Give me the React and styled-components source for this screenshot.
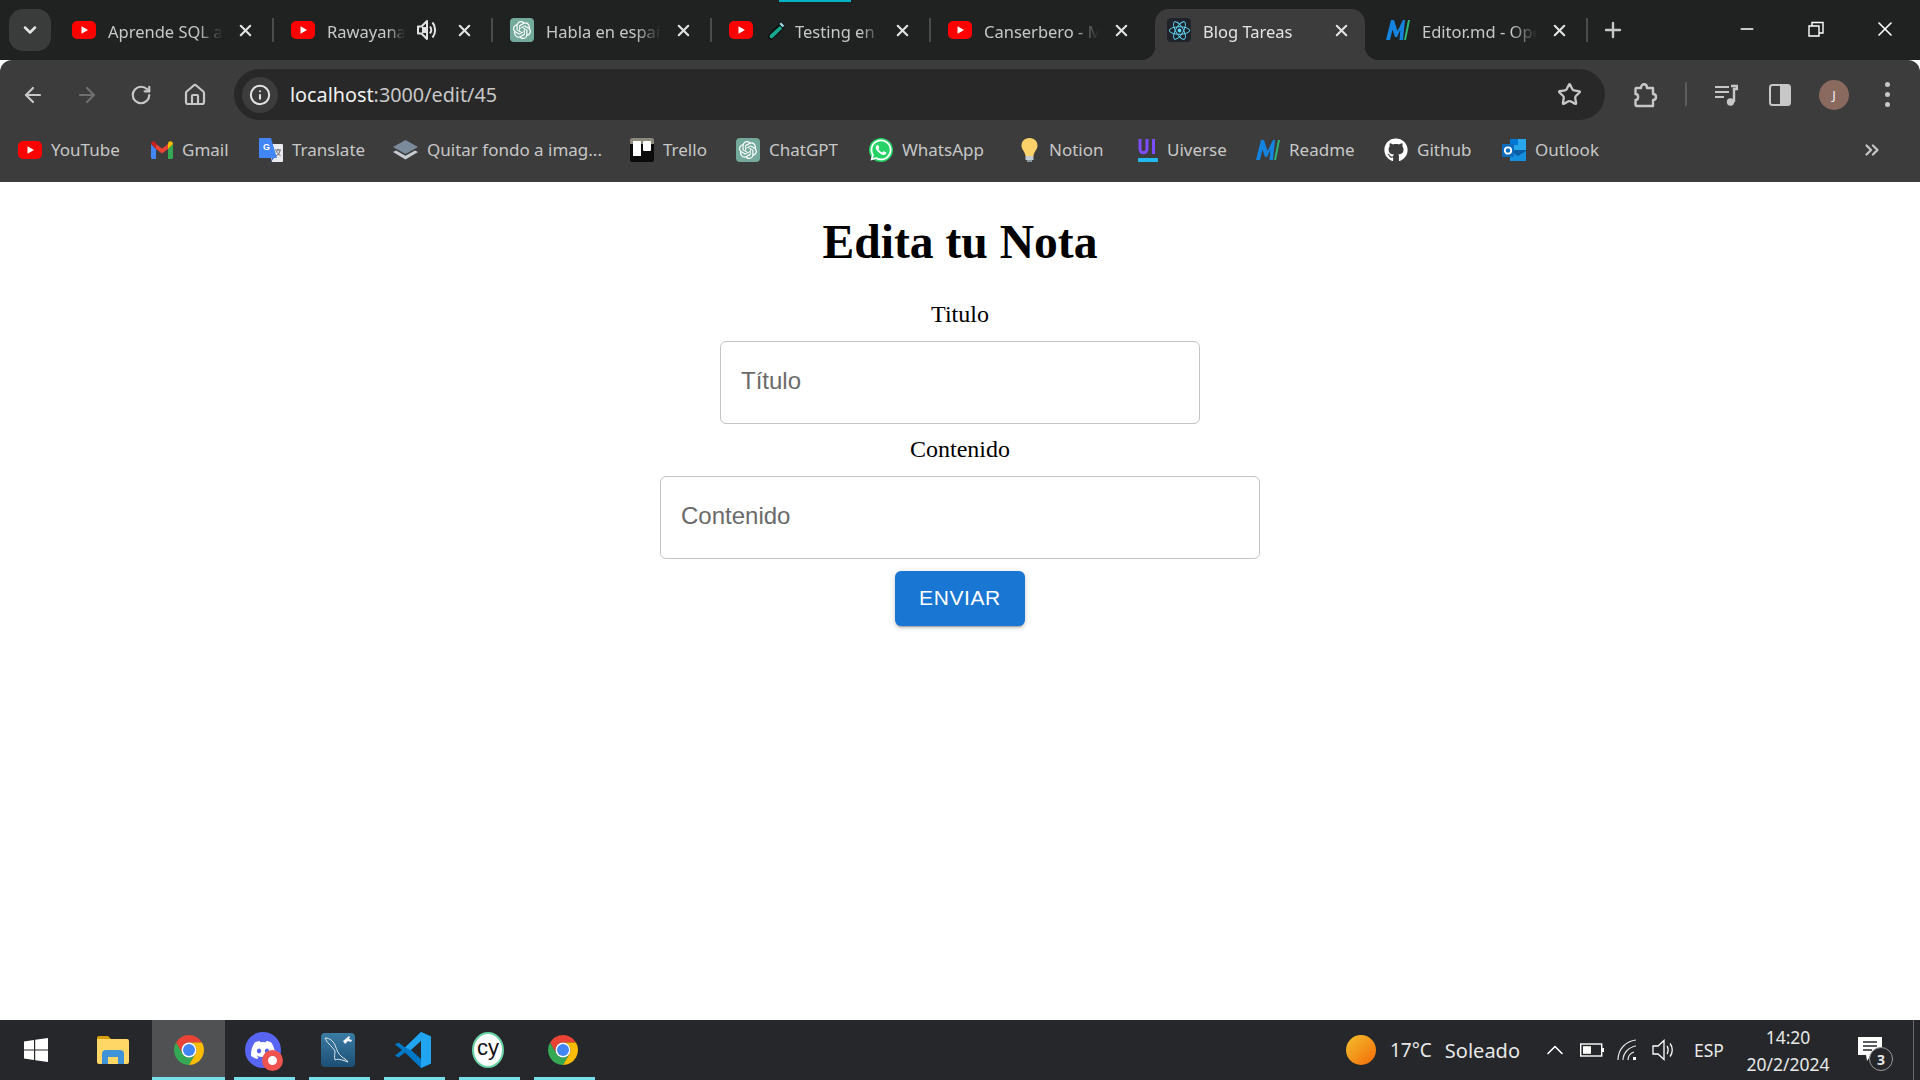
import React from 'react'
import styled, { createGlobalStyle } from 'styled-components'
import { FaWhatsapp, FaGithub, FaReact, FaDiscord } from 'react-icons/fa'
import { SiOpenai } from 'react-icons/si'
import {
    ArrowLeft, ArrowRight, RotateCw, Home, Info, Star, X, Plus, Minus,
    ChevronDown, ChevronsRight, ChevronUp
} from 'lucide-react'

const UI_FONT = '"Noto Sans", "Open Sans", sans-serif'

const GlobalStyle = createGlobalStyle`
  html, body { margin: 0; padding: 0; background: #fff; }
  * { box-sizing: border-box; }
`

/* ---------- drawings ---------- */

const YouTubeIcon = () => (
    <svg width="24" height="18" viewBox="0 0 24 18">
        <rect width="24" height="18" rx="5" fill="#f00" />
        <path d="M9.5 5.2v7.6L16 9z" fill="#fff" />
    </svg>
)

const ChatGptIcon = () => (
    <GptTile><SiOpenai size={18} color="#fff" /></GptTile>
)

const TubeIcon = () => (
    <svg width="20" height="21" viewBox="0 0 24 26">
        <path d="M16 3l6 6L8 23c-2 2-4.500 2-6 .5S.5 19.500 2 17.500z" fill="#111" />
        <path d="M15.500 7.500l3 3L7.500 21.500c-1.500 1.400-3 1.400-4 .5s-.8-2.500.5-4z" fill="#14a98f" />
        <path d="M15 5l2-2 4 4-2 2z" fill="#9fe0e8" />
    </svg>
)

const ReactIcon = () => (
    <ReactTile><FaReact size={21} color="#61dafb" /></ReactTile>
)

const EditorMdIcon = () => (
    <svg width="24" height="20" viewBox="0 0 24 20">
        <path d="M0 20L5 0h3l3.500 11L17 0h2l-2 20h-3.500l.8-10-3.300 7H9L6.500 9.500 4 20z" fill="#1583e0" />
        <path d="M18 20L22 0h2l-4 20z" fill="#2bb673" />
    </svg>
)

const GmailIcon = () => (
    <svg width="22" height="18" viewBox="0 0 22 18">
        <path d="M0 3v13.500C0 17.300.7 18 1.500 18H5V8z" fill="#4285f4" />
        <path d="M22 3v13.500c0 .8-.7 1.500-1.500 1.500H17V8z" fill="#34a853" />
        <path d="M5 8v-5l6 4.500L17 3v5l-6 4.500z" fill="#ea4335" />
        <path d="M0 3c0-2.500 2.700-3.500 4.500-2L5 3v5z" fill="#c5221f" />
        <path d="M22 3c0-2.500-2.700-3.500-4.500-2L17 3v5z" fill="#fbbc04" />
    </svg>
)

const TranslateIcon = () => (
    <svg width="24" height="24" viewBox="0 0 24 24">
        <path d="M9 6h14a1 1 0 011 1v16a1 1 0 01-1 1H13z" fill="#e8eaed" />
        <path d="M1 0h11l6 20H1a1 1 0 01-1-1V1a1 1 0 011-1z" fill="#4285f4" />
        <path d="M13 20l-1 4 3-4z" fill="#3367d6" />
        <text x="4" y="12" fontSize="9" fontWeight="700" fontFamily="Liberation Sans, sans-serif" fill="#fff">G</text>
        <path d="M16 12h6M19 11v1.500M17 18c2.500-1.500 3.500-3 4-5.500M17.500 13c.8 2 2 3.500 4 4.500" stroke="#5f6368" strokeWidth="1" fill="none" />
    </svg>
)

const LayersIcon = () => (
    <svg width="25" height="20" viewBox="0 0 25 20">
        <path d="M12.500 0L25 7l-12.500 7L0 7z" fill="#7b8a9a" />
        <path d="M3 10.500l9.500 5.300 9.500-5.300 3 1.500-12.500 7.500L0 12z" fill="#c8ccd0" />
    </svg>
)

const TrelloIcon = () => (
    <svg width="24" height="24" viewBox="0 0 24 24">
        <rect width="24" height="24" rx="2" fill="#0b0b0b" />
        <path d="M0 2a2 2 0 012-2h20a2 2 0 012 2v4H0z" fill="#8d8a7d" />
        <rect x="3" y="3" width="8" height="15" fill="#fff" />
        <rect x="13" y="3" width="8" height="10" rx="1" fill="#fff" />
    </svg>
)

const WhatsAppIcon = () => (
    <WhatsTile><FaWhatsapp size={24} color="#fff" /></WhatsTile>
)

const BulbIcon = () => (
    <svg width="25" height="24" viewBox="-4 0 25 24">
        <path d="M10.500 0C5 0 2.500 4 2.500 7.500c0 4 3.500 6 4 10.500h8c.5-4.500 4-6.500 4-10.500C18.500 4 16 0 10.500 0z" fill="#fbd26a" />
        <rect x="6.500" y="18" width="8" height="4" fill="#c3cbd3" />
        <rect x="8" y="22" width="5" height="2" fill="#8a949e" />
    </svg>
)

const UiverseIcon = () => (
    <svg width="22" height="24" viewBox="-2 0 22 24">
        <path d="M2 1v10c0 5 7 5 7 0V1" fill="none" stroke="#7c4dff" strokeWidth="3" />
        <path d="M15.500 1v15" fill="none" stroke="#7c4dff" strokeWidth="3" />
        <rect y="20" width="20" height="4" rx="1" fill="#22b8f0" />
    </svg>
)

const OutlookIcon = () => (
    <svg width="24" height="24" viewBox="0 0 24 24">
        <rect x="8" y="1" width="16" height="12" fill="#28a8ea" />
        <rect x="8" y="1" width="8" height="6" fill="#0078d4" />
        <path d="M8 12l16 0v10a1 1 0 01-1 1H9a1 1 0 01-1-1z" fill="#0a5ea8" />
        <path d="M8 13l8 5 8-5v10H8z" fill="#1490df" />
        <rect y="6" width="12" height="13" rx="1" fill="#0f6cbd" />
        <circle cx="6" cy="12.500" r="3.200" fill="none" stroke="#fff" strokeWidth="1.800" />
    </svg>
)

const ExtensionIcon = () => (
    <svg width="26" height="26" viewBox="0 0 26 26">
        <path d="M3 6h5c0-5 6-5 6 0h6v6c4 0 4 6 0 6v6H4a1.500 1.500 0 01-1.500-1.500V18c3.500 0 3.500-6 0-6V7.500A1.500 1.500 0 013 6z" fill="none" stroke="#c7c7c7" strokeWidth="2.400" strokeLinejoin="round" />
    </svg>
)

const MediaIcon = () => (
    <svg width="24" height="24" viewBox="0 0 24 24">
        <path d="M1 4h14M1 9h14M1 14h9" stroke="#c7c7c7" strokeWidth="2.200" />
        <path d="M17 3h6v3h-3v13" fill="none" stroke="#c7c7c7" strokeWidth="2.400" />
        <circle cx="16.500" cy="19" r="3.700" fill="#c7c7c7" />
    </svg>
)

const TabAudioIcon = () => (
    <svg width="20" height="22" viewBox="0 0 20 22">
        <path d="M1 7.500h3.500L10 2v18l-5.500-5.500H1z" fill="none" stroke="#e3e3e3" strokeWidth="2" strokeLinejoin="round" />
        <path d="M5 8h4v6H5z" fill="#e3e3e3" />
        <path d="M13 7.500c1.500 2 1.500 5 0 7M15.500 3.500c3.500 4 3.500 11 0 15" fill="none" stroke="#e3e3e3" strokeWidth="2" />
    </svg>
)

const ChromeLogo = () => (
    <svg width="36" height="36" viewBox="0 0 48 48">
        <path d="M41.320 14H24a10 10 0 00-8.660 15L6.680 14a20 20 0 0134.640 0z" fill="#ea4335" />
        <path d="M6.680 14l8.660 15a10 10 0 0017.320 0L24 44A20 20 0 016.680 14z" fill="#34a853" />
        <path d="M41.320 14H24a10 10 0 018.660 15L24 44a20 20 0 0017.320-30z" fill="#fbbc04" />
        <circle cx="24" cy="24" r="10" fill="#fff" />
        <circle cx="24" cy="24" r="8" fill="#4285f4" />
    </svg>
)

const WindowsLogo = () => (
    <svg width="24" height="24" viewBox="0 0 24 24">
        <path d="M0 3.400L10 2v9.400H0zM11.200 1.800L24 0v11.400H11.200zM0 12.600h10V22L0 20.600zM11.200 12.600H24V24l-12.800-1.800z" fill="#fff" />
    </svg>
)

const FolderLogo = () => (
    <svg width="32" height="28" viewBox="0 0 32 28">
        <path d="M0 2a2 2 0 012-2h9l3 3h-14z" fill="#d99e0b" />
        <path d="M0 3h30a2 2 0 012 2v21a2 2 0 01-2 2H2a2 2 0 01-2-2z" fill="#ffd766" />
        <path d="M5 28v-10a4 4 0 014-4h14a4 4 0 014 4v10h-6v-7h-10v7z" fill="#3f93d9" />
    </svg>
)

const MysqlLogo = () => (
    <svg width="34" height="34" viewBox="0 0 34 34">
        <rect width="34" height="34" rx="4" fill="url(#mysqlBg)" />
        <defs>
            <linearGradient id="mysqlBg" x1="0" y1="0" x2="0" y2="1">
                <stop offset="0" stopColor="#3a7ca5" />
                <stop offset="1" stopColor="#1d4f74" />
            </linearGradient>
        </defs>
        <path d="M4 5c5 0 8 3 10 7 2 5 3 9 7 12 2 1.500 4 2 6 5-2-1-4-1.500-6-2-3-1-5-1-7 0-1-3 0-6 0-9-2-3-4-5-6-7-2-2-3-4-4-6z" fill="none" stroke="#dfe7ec" strokeWidth="1" />
        <path d="M22 8l6-5 1 1-1 2 3 1-1 2-3-1-3 3z" fill="#f1f5f7" />
    </svg>
)

const VsCodeLogo = () => (
    <svg width="36" height="36" viewBox="0 0 36 36">
        <path d="M26 0l10 4.500v27L26 36 10 20.500l-6.500 5L0 23.500 7 18 0 12.500l3.500-2 6.500 5z" fill="#0078c8" />
        <path d="M26 0l10 4.500v27L26 36V9l-10 9-6-2.500z" fill="#22a5f1" />
        <path d="M26 9v18l-10-9z" fill="#25272a" />
    </svg>
)

const BatteryIcon = () => (
    <svg width="24" height="14" viewBox="0 0 24 14">
        <rect x=".7" y="1" width="21" height="12" fill="none" stroke="#fff" strokeWidth="1.400" />
        <rect x="3" y="3.200" width="8" height="7.600" fill="#fff" />
        <rect x="22" y="5" width="2" height="4" fill="#fff" />
    </svg>
)

const WifiIcon = () => (
    <svg width="22" height="22" viewBox="0 0 22 22">
        <path d="M1 21C1 10 9 2 19 1M6 21c0-7 6-13 13-14M11 21c0-4 3-7 6-8" fill="none" stroke="#e3e3e3" strokeWidth="1.200" />
        <rect x="16" y="18" width="3" height="3" fill="#fff" />
    </svg>
)

const SpeakerIcon = () => (
    <svg width="24" height="22" viewBox="0 0 24 22">
        <path d="M1 7h5l6-5.500v19L6 15H1z" fill="none" stroke="#fff" strokeWidth="1.300" />
        <path d="M15 7c1.500 2 1.500 6 0 8M18 4.500c3 3.500 3 9.500 0 13" fill="none" stroke="#fff" strokeWidth="1.300" />
    </svg>
)

const ChatBubble = () => (
    <svg width="24" height="26" viewBox="0 0 24 26">
        <path d="M0 0h24v18H13l-4 6-1-6H0z" fill="#fff" />
        <path d="M5 5h14M5 9h14M5 13h9" stroke="#25272a" strokeWidth="1.500" />
    </svg>
)

const SidePanelIcon = () => (
    <svg width="22" height="22" viewBox="0 0 22 22">
        <rect x="1" y="1" width="20" height="20" rx="2.500" fill="none" stroke="#c7c7c7" strokeWidth="2" />
        <rect x="11" y="1" width="10" height="20" fill="#c7c7c7" />
    </svg>
)

const RestoreIcon = () => (
    <svg width="16" height="16" viewBox="0 0 16 16">
        <path d="M1 5h10v10H1zM4 5V1.500h11V12h-4" fill="none" stroke="#fff" strokeWidth="1.400" />
    </svg>
)

/* ---------- data ---------- */

const tabs = [
    { icons: [<YouTubeIcon key="a" />], title: 'Aprende SQL a fondo' },
    { icons: [<YouTubeIcon key="a" />], title: 'Rawayana - Oh Oh', audio: true },
    { icons: [<ChatGptIcon key="a" />], title: 'Habla en español' },
    { icons: [<YouTubeIcon key="a" />, <TubeIcon key="b" />], title: 'Testing en React', double: true },
    { icons: [<YouTubeIcon key="a" />], title: 'Canserbero - Mundo de piedra', hideSep: true },
    { icons: [<ReactIcon key="a" />], title: 'Blog Tareas', active: true, noSep: true },
    { icons: [<EditorMdIcon key="a" />], title: 'Editor.md - Open source' },
]

// w = label width
const bookmarks = [
    { icon: <YouTubeIcon />, label: 'YouTube', w: 69 },
    { icon: <GmailIcon />, label: 'Gmail', w: 46 },
    { icon: <TranslateIcon />, label: 'Translate', w: 70 },
    { icon: <LayersIcon />, label: 'Quitar fondo a imag...', w: 172 },
    { icon: <TrelloIcon />, label: 'Trello', w: 42 },
    { icon: <ChatGptIcon />, label: 'ChatGPT', w: 69 },
    { icon: <WhatsAppIcon />, label: 'WhatsApp', w: 82 },
    { icon: <BulbIcon />, label: 'Notion', w: 56 },
    { icon: <UiverseIcon />, label: 'Uiverse', w: 58 },
    { icon: <EditorMdIcon />, label: 'Readme', w: 64 },
    { icon: <FaGithub size={24} color="#fff" />, label: 'Github', w: 54 },
    { icon: <OutlookIcon />, label: 'Outlook', w: 64 },
]

const App = () => {
    return (
        <Screen>
            <GlobalStyle />
            <TabStrip>
                <LoadingBar />
                <TabSearch><ChevronDown size={20} strokeWidth={3} color="#e3e3e3" /></TabSearch>
                {tabs.map((tab) => (
                    <Tab key={tab.title} $active={tab.active}>
                        <Favicons $double={tab.double}>{tab.icons}</Favicons>
                        <TabTitle $active={tab.active}>{tab.title}</TabTitle>
                        {tab.audio && <AudioIcon><TabAudioIcon /></AudioIcon>}
                        <TabClose><X size={19} strokeWidth={2.6} color="#e3e3e3" /></TabClose>
                        {!tab.noSep && <TabSeparator $hidden={tab.hideSep} />}
                    </Tab>
                ))}
                <NewTab><Plus size={24} strokeWidth={2.4} color="#c7c7c7" /></NewTab>
                <WindowControls>
                    <WindowButton><Minus size={20} strokeWidth={1.6} color="#fff" /></WindowButton>
                    <WindowButton><RestoreIcon /></WindowButton>
                    <WindowButton><X size={24} strokeWidth={1.6} color="#fff" /></WindowButton>
                </WindowControls>
            </TabStrip>

            <Toolbar>
                <ToolRow>
                    <NavGroup>
                        <ToolButton><ArrowLeft size={24} strokeWidth={2.2} color="#c7c7c7" /></ToolButton>
                        <ToolButton><ArrowRight size={24} strokeWidth={2.2} color="#6f7070" /></ToolButton>
                        <ToolButton><RotateCw size={22} strokeWidth={2.4} color="#c7c7c7" /></ToolButton>
                        <ToolButton><Home size={24} strokeWidth={2.2} color="#c7c7c7" /></ToolButton>
                    </NavGroup>
                    <AddressBar>
                        <InfoChip><Info size={22} strokeWidth={2.2} color="#e3e3e3" /></InfoChip>
                        <Url><strong>localhost</strong>:3000/edit/45</Url>
                        <Star size={25} strokeWidth={2.2} color="#c7c7c7" />
                    </AddressBar>
                    <ToolButton><ExtensionIcon /></ToolButton>
                    <ToolDivider />
                    <ToolButton><MediaIcon /></ToolButton>
                    <ToolButton><SidePanelIcon /></ToolButton>
                    <ToolButton><Avatar>J</Avatar></ToolButton>
                    <ToolButton><MenuDots><i /><i /><i /></MenuDots></ToolButton>
                </ToolRow>
                <BookmarksBar>
                    {bookmarks.map((b) => (
                        <Bookmark key={b.label}>
                            {b.icon}
                            <BookmarkLabel $w={b.w}>{b.label}</BookmarkLabel>
                        </Bookmark>
                    ))}
                    <MoreBookmarks><ChevronsRight size={22} strokeWidth={2.4} color="#c7c7c7" /></MoreBookmarks>
                </BookmarksBar>
            </Toolbar>

            <Page>
                <Heading>Edita tu Nota</Heading>
                <Form>
                    <FieldLabel htmlFor="titulo">Titulo</FieldLabel>
                    <TextInput id="titulo" placeholder="Título" $width={480} />
                    <FieldLabel htmlFor="contenido">Contenido</FieldLabel>
                    <TextInput id="contenido" placeholder="Contenido" $width={600} />
                    <SubmitButton type="button">ENVIAR</SubmitButton>
                </Form>
            </Page>

            <Taskbar>
                <StartButton><WindowsLogo /></StartButton>
                <TaskItem><FolderLogo /></TaskItem>
                <TaskItem $open $active><ChromeLogo /></TaskItem>
                <TaskItem $open>
                    <DiscordTile><FaDiscord size={26} color="#fff" /><RecBadge /></DiscordTile>
                </TaskItem>
                <TaskItem $open><MysqlLogo /></TaskItem>
                <TaskItem $open><VsCodeLogo /></TaskItem>
                <TaskItem $open><CypressTile>cy</CypressTile></TaskItem>
                <TaskItem $open><ChromeLogo /></TaskItem>

                <Tray>
                    <WeatherOrb />
                    <WeatherText>17°C</WeatherText>
                    <WeatherText $wide>Soleado</WeatherText>
                    <TrayIcon $w={38} $first><ChevronUp size={28} strokeWidth={1.4} color="#fff" /></TrayIcon>
                    <TrayIcon $w={36}><BatteryIcon /></TrayIcon>
                    <TrayIcon $w={36}><WifiIcon /></TrayIcon>
                    <TrayIcon $w={36}><SpeakerIcon /></TrayIcon>
                    <Lang>ESP</Lang>
                    <Clock>
                        <span>14:20</span>
                        <span>20/2/2024</span>
                    </Clock>
                    <Notifications>
                        <ChatBubble />
                        <NotifCount>3</NotifCount>
                    </Notifications>
                    <ShowDesktop />
                </Tray>
            </Taskbar>
        </Screen>
    )
}

export default App

const Screen = styled.div`
    width: 1920px;
    height: 1080px;
    display: flex;
    flex-direction: column;
    overflow: hidden;
    font-family: ${UI_FONT};
`

const TabStrip = styled.div`
    position: relative;
    height: 60px;
    flex: none;
    display: flex;
    align-items: flex-start;
    padding: 9px 0 0 9px;
    background: #202222;
`

const LoadingBar = styled.div`
    position: absolute;
    top: 0;
    left: 779px;
    width: 72px;
    height: 2px;
    background: #00b3c4;
`

const TabSearch = styled.div`
    width: 42px;
    height: 42px;
    flex: none;
    margin-right: 4px;
    display: flex;
    align-items: center;
    justify-content: center;
    background: #3a3b3b;
    border-radius: 14px;
`

const Tab = styled.div`
    position: relative;
    flex: none;
    display: flex;
    align-items: center;
    width: ${(p) => (p.$active ? '210px' : '219px')};
    height: ${(p) => (p.$active ? '51px' : '42px')};
    margin: ${(p) => (p.$active ? '0 4px 0 5px' : '0')};
    padding: ${(p) => (p.$active ? '0 14px 9px 12px' : '0 0 0 17px')};
    border-radius: 14px 14px 0 0;
    background: ${(p) => (p.$active ? '#3c3c3c' : 'transparent')};

    ${(p) => p.$active && `
        &::before, &::after {
            content: '';
            position: absolute;
            bottom: 0;
            width: 14px;
            height: 14px;
        }
        &::before { left: -14px; background: radial-gradient(circle at 0 0, transparent 14px, #3c3c3c 14.500px); }
        &::after { right: -14px; background: radial-gradient(circle at 100% 0, transparent 14px, #3c3c3c 14.500px); }
    `}
`

const Favicons = styled.div`
    flex: none;
    display: flex;
    align-items: center;
    gap: 14px;
    margin-right: ${(p) => (p.$double ? '8px' : '12px')};
`

const GptTile = styled.div`
    width: 24px;
    height: 24px;
    display: flex;
    align-items: center;
    justify-content: center;
    flex: none;
    background: #74aa9c;
    border-radius: 4px;
`

const ReactTile = styled(GptTile)`
    background: #20232a;
`

const WhatsTile = styled(GptTile)`
    background: #25d366;
    border-radius: 50%;
`

const TabTitle = styled.div`
    flex: 1;
    min-width: 0;
    margin-top: 2px;
    font-size: 16.500px;
    white-space: nowrap;
    overflow: hidden;
    color: ${(p) => (p.$active ? '#e3e3e3' : '#c7c7c7')};
    -webkit-mask-image: linear-gradient(to right, #000 78%, transparent 100%);
    mask-image: linear-gradient(to right, #000 78%, transparent 100%);
`

const AudioIcon = styled.div`
    flex: none;
    display: flex;
    margin: 0 5px 0 12px;
`

const TabClose = styled.div`
    flex: none;
    width: 20px;
    height: 20px;
    margin-left: 12px;
    display: flex;
    align-items: center;
    justify-content: center;
`

const TabSeparator = styled.div`
    flex: none;
    width: 2px;
    height: 24px;
    margin-left: 17px;
    background: ${(p) => (p.$hidden ? 'transparent' : '#4a4b4b')};
`

const NewTab = styled.div`
    flex: none;
    width: 24px;
    height: 42px;
    margin-left: 13px;
    display: flex;
    align-items: center;
    justify-content: center;
`

const WindowControls = styled.div`
    margin-left: auto;
    margin-top: -9px;
    display: flex;
`

const WindowButton = styled.div`
    width: 69.330px;
    height: 58px;
    display: flex;
    align-items: center;
    justify-content: center;
`

const Toolbar = styled.div`
    flex: none;
    background: #3c3c3c;
    border-radius: 12px 12px 0 0;
`

const ToolRow = styled.div`
    height: 60px;
    display: flex;
    align-items: flex-end;
    padding: 0 5px 0 6px;
`

const NavGroup = styled.div`
    display: flex;
    margin-right: 12px;
`

const ToolButton = styled.div`
    flex: none;
    width: 54px;
    height: 51px;
    display: flex;
    align-items: center;
    justify-content: center;
`

const AddressBar = styled.div`
    flex: 1;
    height: 51px;
    margin-right: 14px;
    display: flex;
    align-items: center;
    padding: 0 23px 0 8px;
    background: #282828;
    border-radius: 26px;
`

const InfoChip = styled.div`
    flex: none;
    width: 36px;
    height: 36px;
    margin-right: 12px;
    display: flex;
    align-items: center;
    justify-content: center;
    background: #3c3c3c;
    border-radius: 50%;
`

const Url = styled.div`
    flex: 1;
    font-size: 19.800px;
    color: #c7c7c7;

    strong {
        font-weight: 400;
        color: #f1f1f1;
    }
`

const ToolDivider = styled.div`
    flex: none;
    width: 2px;
    height: 24px;
    margin: 0 12px 14px 12px;
    background: #5c5c5c;
`

const Avatar = styled.div`
    width: 30px;
    height: 30px;
    display: flex;
    align-items: center;
    justify-content: center;
    font-size: 13px;
    color: #f1f1f1;
    background: #8a6a5f;
    border-radius: 50%;
`

const MenuDots = styled.div`
    display: flex;
    flex-direction: column;
    gap: 5px;
    margin-right: 2px;

    i {
        display: block;
        width: 5px;
        height: 5px;
        background: #c7c7c7;
        border-radius: 50%;
    }
`

const BookmarksBar = styled.div`
    height: 62px;
    padding: 0 37px 2px 18px;
    display: flex;
    align-items: center;
    gap: 31px;
`

const Bookmark = styled.div`
    flex: none;
    display: flex;
    align-items: center;
    gap: 9px;
    font-size: 17px;
    color: #c7c7c7;
`

const BookmarkLabel = styled.span`
    width: ${(p) => p.$w}px;
    margin-top: -2px;
    white-space: nowrap;
`

const MoreBookmarks = styled.div`
    margin-left: auto;
    display: flex;
`

const Page = styled.main`
    flex: 1;
    display: flex;
    flex-direction: column;
    align-items: center;
    background: #fff;
`

const Heading = styled.h1`
    margin: 33px 0 31px;
    font-family: "Liberation Serif", serif;
    font-size: 47.600px;
    line-height: 55px;
    font-weight: 700;
    color: #000;
`

const Form = styled.form`
    display: flex;
    flex-direction: column;
    align-items: center;
    gap: 12px;
`

const FieldLabel = styled.label`
    height: 28px;
    font-family: "Liberation Serif", serif;
    font-size: 24px;
    line-height: 27px;
    color: #000;
`

const TextInput = styled.input`
    width: ${(p) => p.$width}px;
    height: 83px;
    padding: 0 20px 3px;
    border: 1.500px solid #c4c4c4;
    border-radius: 6px;
    outline: none;
    font-family: "Liberation Sans", Arial, sans-serif;
    font-size: 24px;
    color: #222;

    &::placeholder {
        color: #6a6a6a;
        opacity: 1;
    }
`

const SubmitButton = styled.button`
    width: 130px;
    height: 55px;
    padding: 0 0 2px;
    border: none;
    border-radius: 6px;
    background: #1976d2;
    color: #fff;
    font-family: "Liberation Sans", Arial, sans-serif;
    font-size: 21px;
    letter-spacing: 0.6px;
    box-shadow: 0 3px 1px -2px rgba(0, 0, 0, 0.2), 0 2px 3px 0 rgba(0, 0, 0, 0.14), 0 1px 7px 0 rgba(0, 0, 0, 0.12);
`

const Taskbar = styled.footer`
    flex: none;
    height: 60px;
    display: flex;
    align-items: stretch;
    background: #25272a;
`

const StartButton = styled.div`
    width: 77px;
    padding-right: 5px;
    display: flex;
    align-items: center;
    justify-content: center;
`

const TaskItem = styled.div`
    position: relative;
    width: ${(p) => (p.$active ? '73px' : '75px')};
    margin-right: ${(p) => (p.$active ? '2px' : '0')};
    padding-right: ${(p) => (p.$active ? '0' : '3px')};
    display: flex;
    align-items: center;
    justify-content: center;
    background: ${(p) => (p.$active ? '#505152' : 'transparent')};

    &::after {
        content: '';
        display: ${(p) => (p.$open ? 'block' : 'none')};
        position: absolute;
        bottom: 0;
        left: ${(p) => (p.$active ? '0' : '7px')};
        right: ${(p) => (p.$active ? '0' : '7px')};
        height: 3px;
        background: #76e0e8;
    }
`

const DiscordTile = styled.div`
    position: relative;
    width: 36px;
    height: 36px;
    display: flex;
    align-items: center;
    justify-content: center;
    background: #5865f2;
    border-radius: 50%;
`

const RecBadge = styled.div`
    position: absolute;
    right: -2px;
    bottom: -3px;
    width: 21px;
    height: 21px;
    border: 6px solid #ef5350;
    background: #fff;
    border-radius: 50%;
`

const CypressTile = styled.div`
    width: 32px;
    height: 36px;
    display: flex;
    align-items: center;
    justify-content: center;
    padding-bottom: 4px;
    font-family: "Liberation Sans", Arial, sans-serif;
    font-size: 22px;
    color: #111;
    background: #fff;
    border: 2px solid #69d3a7;
    border-radius: 50%;
`

const Tray = styled.div`
    margin-left: auto;
    display: flex;
    align-items: center;
    color: #e8e8e8;
`

const WeatherOrb = styled.div`
    width: 30px;
    height: 30px;
    margin-right: 14px;
    background: linear-gradient(135deg, #f2c02e, #f56a07);
    border-radius: 50%;
`

const WeatherText = styled.div`
    font-size: ${(p) => (p.$wide ? '20px' : '19px')};
    margin-left: ${(p) => (p.$wide ? '13px' : '0')};
`

const TrayIcon = styled.div`
    width: ${(p) => p.$w}px;
    margin-left: ${(p) => (p.$first ? '16px' : '0')};
    display: flex;
    justify-content: center;
`

const Lang = styled.div`
    width: 30px;
    margin-left: 12px;
    font-size: 17.500px;
    display: flex;
    justify-content: center;
`

const Clock = styled.div`
    width: 100px;
    margin-left: 14px;
    display: flex;
    flex-direction: column;
    align-items: center;
    gap: 3px;
    font-size: 17.500px;
    line-height: 24px;
`

const Notifications = styled.div`
    position: relative;
    width: 24px;
    height: 26px;
    margin: 0 31px 0 20px;
`

const NotifCount = styled.div`
    position: absolute;
    right: -11px;
    bottom: -8px;
    width: 24px;
    height: 24px;
    display: flex;
    align-items: center;
    justify-content: center;
    font-size: 14px;
    font-weight: 700;
    background: #25272a;
    border: 1px solid #9a9a9a;
    border-radius: 50%;
`

const ShowDesktop = styled.div`
    align-self: stretch;
    width: 1px;
    margin-right: 6px;
    background: #6a6a6a;
`
